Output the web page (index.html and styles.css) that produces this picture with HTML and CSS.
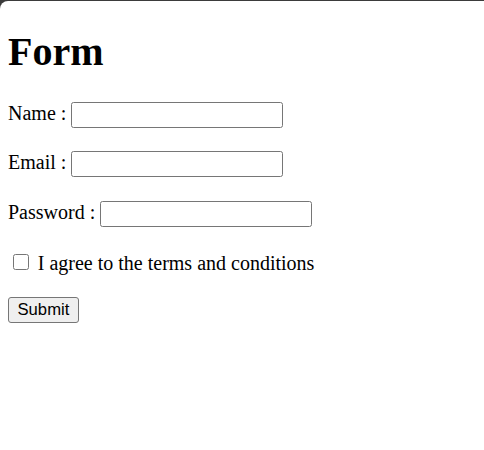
FILE: index.html
```html
<!DOCTYPE html>
<html lang="en">
<head>
<meta charset="utf-8">
<title>Form</title>
<link rel="stylesheet" href="styles.css">
</head>
<body>
<h1 class="title">Form</h1>
<form class="form">
  <p class="row"><label for="name">Name :</label> <input class="field" type="text" id="name"></p>
  <p class="row"><label for="email">Email :</label> <input class="field" type="email" id="email"></p>
  <p class="row"><label for="password">Password :</label> <input class="field" type="password" id="password"></p>
  <p class="row row-check"><input class="check" type="checkbox" id="agree"> <label for="agree">I agree to the terms and conditions</label></p>
  <button class="submit" type="submit">Submit</button>
</form>
</body>
</html>
```
FILE: styles.css
```css
html {
  background: #3b3b3b;
  margin: 0;
}
body {
  display: flow-root;
  margin: 1px 0 0 0;
  padding: 0 10px 0 8px;
  min-height: calc(100vh - 1px);
  box-sizing: border-box;
  background: #ffffff;
  border-top-left-radius: 8px;
  font-family: "Liberation Serif", "Times New Roman", serif;
  font-size: 20px;
  color: #000;
}
.title {
  font-size: 40px;
  font-weight: bold;
  margin: 26.8px 0;
}
.form {
  margin: 0;
}
.row {
  height: 29.5px;
  margin: 20px 0;
}
.row-check {
  height: 27px;
}
.field {
  box-sizing: border-box;
  width: 212px;
  height: 26px;
  padding: 1px 2.5px;
  margin: 0;
  border: 1px solid #767676;
  border-radius: 2.5px;
  background: #fff;
  font-family: "Liberation Sans", Arial, sans-serif;
  font-size: 16.67px;
  vertical-align: baseline;
}
.check {
  width: 16px;
  height: 16px;
  margin: 3.75px 3.75px 5.75px 5px;
  vertical-align: baseline;
}
.submit {
  box-sizing: border-box;
  height: 26px;
  padding: 1px 8.5px;
  margin: 0;
  border: 1px solid #767676;
  border-radius: 3px;
  background: #efefef;
  color: #000;
  font-family: "Liberation Sans", Arial, sans-serif;
  font-size: 16.67px;
}
```
